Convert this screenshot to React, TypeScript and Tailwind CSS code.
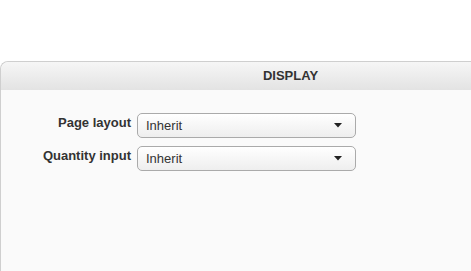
function Caret() {
  return (
    <svg width="8" height="5" viewBox="0 0 8 5" className="shrink-0">
      <path d="M0 0h8L4 4.5z" fill="#222" />
    </svg>
  );
}

function SelectField({ label, value }: { label: string; value: string }) {
  return (
    <div className="flex items-start">
      <label className="w-[136px] pr-[6px] text-right text-[13px] font-bold leading-[20px] text-[#333]">
        {label}
      </label>
      <div className="flex h-[25px] w-[219px] items-center justify-between rounded-[5px] border border-[#aaa] bg-gradient-to-b from-white to-[#eeeeee] pl-[8px] pr-[13px] text-[13px] text-[#333]">
        <span className="pt-[1px]">{value}</span>
        <Caret />
      </div>
    </div>
  );
}

export default function App() {
  return (
    <div className="h-[271px] w-[471px] overflow-hidden bg-white font-['Liberation_Sans',Arial,sans-serif]">
      <div className="mt-[61px] h-[260px] w-[580px] rounded-tl-[8px] border-l border-t border-[#cfcfcf] bg-[#fafafa]">
        <div className="flex h-[28px] items-center justify-center rounded-tl-[8px] bg-gradient-to-b from-[#f6f6f6] to-[#e3e3e3] text-[13px] font-bold text-[#333]">
          DISPLAY
        </div>
        <div className="flex flex-col gap-[8px] pt-[23px]">
          <SelectField label="Page layout" value="Inherit" />
          <SelectField label="Quantity input" value="Inherit" />
        </div>
      </div>
    </div>
  );
}
